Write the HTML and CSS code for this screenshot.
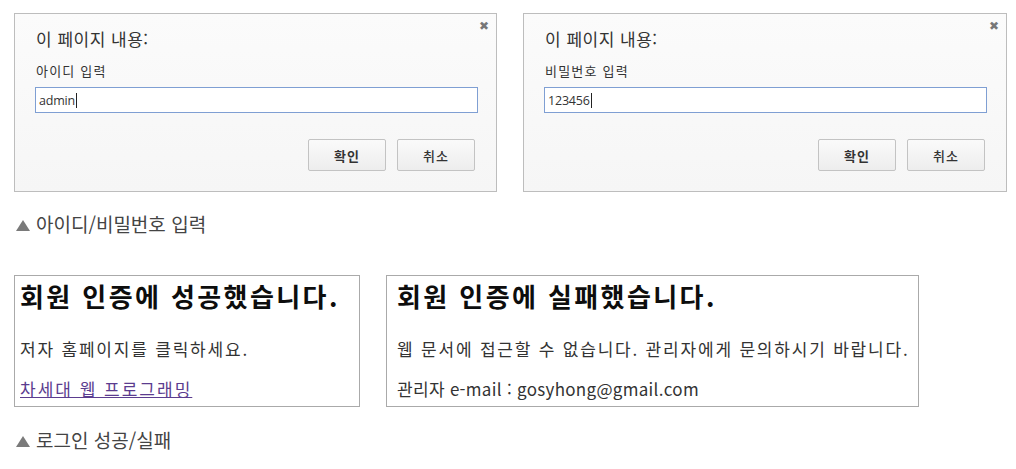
FILE: index.html
```html
<!DOCTYPE html>
<html lang="ko">
<head>
<meta charset="utf-8">
<link rel="stylesheet" href="styles.css">
</head>
<body>
<div class="page">
  <div class="dialogs">
    <div class="dialog">
      <span class="close">&#x2716;</span>
      <div class="dtitle">이 페이지 내용:</div>
      <div class="dlabel">아이디 입력</div>
      <div class="dinput">admin<span class="caret"></span></div>
      <div class="dbuttons">
        <div class="btn ok">확인</div>
        <div class="btn">취소</div>
      </div>
    </div>
    <div class="dialog wide">
      <span class="close">&#x2716;</span>
      <div class="dtitle">이 페이지 내용:</div>
      <div class="dlabel">비밀번호 입력</div>
      <div class="dinput">123456<span class="caret"></span></div>
      <div class="dbuttons">
        <div class="btn ok">확인</div>
        <div class="btn">취소</div>
      </div>
    </div>
  </div>
  <div class="caption cap1"><svg class="tri" width="14" height="11" viewBox="0 0 14 11"><polygon points="7,0 14,11 0,11" fill="#7a7a7a"/></svg><span>아이디/비밀번호 입력</span></div>
  <div class="results">
    <div class="box box1">
      <h1 class="rhead">회원 인증에 성공했습니다.</h1>
      <p class="rtext t1">저자 홈페이지를 클릭하세요.</p>
      <p class="rtext t2"><a class="rlink" href="#">차세대 웹 프로그래밍</a></p>
    </div>
    <div class="box box2">
      <h1 class="rhead">회원 인증에 실패했습니다.</h1>
      <p class="rtext t1">웹 문서에 접근할 수 없습니다. 관리자에게 문의하시기 바랍니다.</p>
      <p class="rtext t2 mail">관리자 e-mail : gosyhong@gmail.com</p>
    </div>
  </div>
  <div class="caption cap2"><svg class="tri" width="14" height="11" viewBox="0 0 14 11"><polygon points="7,0 14,11 0,11" fill="#7a7a7a"/></svg><span>로그인 성공/실패</span></div>
</div>
</body>
</html>
```
FILE: styles.css
```css
* { box-sizing: border-box; }
html, body { margin: 0; padding: 0; background: #fff; }
body { font-family: "Noto Sans CJK KR", "Noto Sans", sans-serif; color: #222; }
.page { padding: 13px 0 0 14px; display: flex; flex-direction: column; align-items: flex-start; }
.dialogs { display: flex; gap: 26px; }
.dialog {
  position: relative;
  width: 483px; height: 179px;
  border: 1px solid #bdbdbd;
  background: linear-gradient(#fbfbfb, #f6f6f6);
  padding: 15px 21px 0 20px;
  display: flex; flex-direction: column;
}
.dialog.wide { width: 484px; }
.close {
  position: absolute; right: 7px; top: 5px;
  font-size: 12px; color: #777; font-family: "DejaVu Sans", sans-serif;
}
.dtitle { font-size: 17px; line-height: 20px; color: #333; padding-left: 1px; letter-spacing: 0.5px; }
.dlabel { font-size: 13px; line-height: 16px; color: #333; margin-top: 14px; padding-left: 1px; letter-spacing: 1.2px; }
.dinput {
  margin-top: 8px; height: 26px; width: 443px;
  border: 1px solid #7f9fd3; background: #fff;
  font-family: "Open Sans", "Noto Sans", sans-serif; font-size: 12.5px; color: #333;
  padding-left: 3px; display: flex; align-items: center; letter-spacing: -0.2px;
}
.caret { display: inline-block; width: 1px; height: 15px; background: #222; margin-left: 1px; }
.dbuttons { display: flex; justify-content: flex-end; gap: 11px; margin-top: 26px; padding-right: 0; }
.btn {
  width: 78px; height: 32px;
  border: 1px solid #c3c3c3; border-radius: 2px;
  background: linear-gradient(#fafafa, #ededed);
  font-size: 13px; color: #333; font-weight: 700; letter-spacing: 1px;
  display: flex; align-items: center; justify-content: center;
}
.btn:not(.ok) { font-weight: 500; }
.caption {
  font-size: 19px; line-height: 20px; color: #444; margin-top: 22px; padding-left: 2px;
  display: flex; align-items: flex-end; gap: 6px;
}
.caption span { line-height: 20px; }
.tri { display: block; margin-bottom: 3px; }
.results { display: flex; gap: 26px; margin-top: 41px; }
.box { height: 132px; border: 1px solid #aaa; padding: 6px 5px 0 5px; }
.box1 { width: 346px; }
.box2 { width: 533px; padding-left: 10px; }
.rhead { margin: 0; font-size: 26px; line-height: 28px; font-weight: 700; color: #0d0d0d; letter-spacing: 2.4px; white-space: nowrap; }
.rtext { margin: 0; font-size: 17px; line-height: 22px; color: #333; white-space: nowrap; }
.t1 { margin-top: 28px; letter-spacing: 1.8px; }
.t2 { margin-top: 18px; }
.rlink { color: #5b3c8f; text-decoration: underline; letter-spacing: 2px; }
.mail { letter-spacing: 0.3px; }
.cap2 { margin-top: 23px; }
```
